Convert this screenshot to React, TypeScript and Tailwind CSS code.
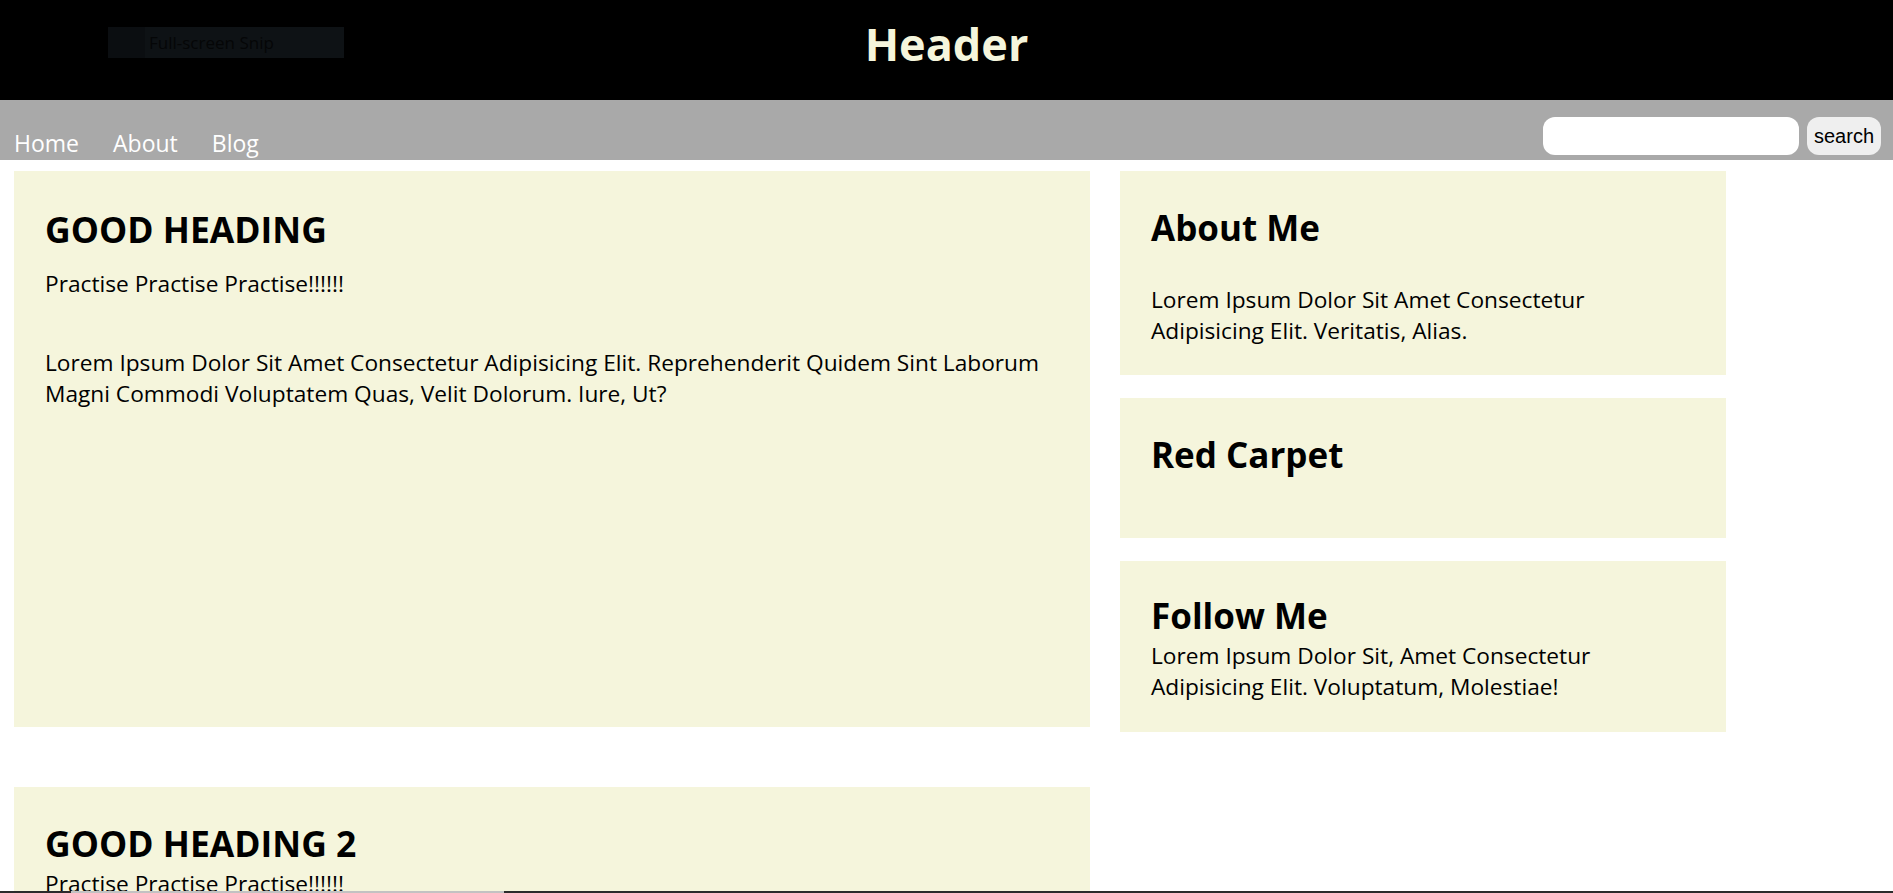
import { useState } from "react";

const font = { fontFamily: '"Segoe UI", "Open Sans", sans-serif' };

function Card({ children, className }: { children: React.ReactNode; className: string }) {
  return <div className={"bg-[#f5f5dc] text-black " + className}>{children}</div>;
}

export default function App() {
  const [query, setQuery] = useState("");

  return (
    <div className="relative min-h-screen bg-white" style={font}>
      {/* header */}
      <header className="relative h-[100px] bg-black pt-[20px] text-center">
        <h1 className="text-[45px] font-bold leading-[48px] text-[#f5f5dc]">Header</h1>
        <div className="absolute left-[108px] top-[27px] flex h-[31px] w-[236px] bg-[#0e1215]">
          <div className="w-[37px] bg-[#0b0e11]" />
          <span className="pl-[4px] text-[17px] leading-[31px] text-[#050607]">Full-screen Snip</span>
        </div>
      </header>

      {/* nav */}
      <nav className="flex h-[60px] items-end justify-between bg-[#a9a9a9] pl-[14px] pr-[12px]">
        <ul className="mb-[2px] flex list-none gap-[34px] text-[23px] leading-[30px] text-white">
          <li><a href="#">Home</a></li>
          <li><a href="#">About</a></li>
          <li><a href="#">Blog</a></li>
        </ul>
        <div className="mb-[5px] flex gap-[8px]" style={{ fontFamily: '"Liberation Sans", Arial, sans-serif' }}>
          <input
            type="text"
            value={query}
            onChange={(e) => setQuery(e.target.value)}
            className="h-[38px] w-[256px] rounded-[12px] border-0 bg-white px-3 text-[18px] outline-none"
          />
          <button type="button" className="h-[38px] w-[74px] rounded-[12px] bg-[#efefef] text-[20px] text-black">
            search
          </button>
        </div>
      </nav>

      {/* content */}
      <div className="flex gap-[30px] pl-[14px] pt-[11px]">
        <main className="flex w-[1076px] flex-col gap-[60px]">
          <Card className="h-[556px] px-[31px] pt-[34px]">
            <h2 className="text-[35.5px] font-bold leading-[48px]">GOOD HEADING</h2>
            <p className="mt-[15px] text-[22.7px] leading-[31px]">Practise Practise Practise!!!!!!</p>
            <p className="mt-[48px] text-[22.7px] leading-[31px]">
              Lorem Ipsum Dolor Sit Amet Consectetur Adipisicing Elit. Reprehenderit Quidem Sint Laborum Magni
              Commodi Voluptatem Quas, Velit Dolorum. Iure, Ut?
            </p>
          </Card>
          <Card className="h-[556px] px-[31px] pt-[32px]">
            <h2 className="text-[35.5px] font-bold leading-[48px]">GOOD HEADING 2</h2>
            <p className="mt-[1px] text-[22.7px] leading-[31px]">Practise Practise Practise!!!!!!</p>
          </Card>
        </main>

        <aside className="flex w-[606px] flex-col gap-[23px]">
          <Card className="h-[204px] px-[31px] pt-[33px]">
            <h3 className="text-[35px] font-bold leading-[48px]">About Me</h3>
            <p className="mt-[32px] text-[22.7px] leading-[31px]">
              Lorem Ipsum Dolor Sit Amet Consectetur Adipisicing Elit. Veritatis, Alias.
            </p>
          </Card>
          <Card className="h-[140px] px-[31px] pt-[33px]">
            <h3 className="text-[35px] font-bold leading-[48px]">Red Carpet</h3>
          </Card>
          <Card className="h-[171px] px-[31px] pt-[31px]">
            <h3 className="text-[35px] font-bold leading-[48px]">Follow Me</h3>
            <p className="pr-[80px] text-[22.7px] leading-[31px]">
              Lorem Ipsum Dolor Sit, Amet Consectetur Adipisicing Elit. Voluptatum, Molestiae!
            </p>
          </Card>
        </aside>
      </div>

      {/* bottom scroll strip */}
      <div className="fixed bottom-0 left-0 flex h-[2px] w-full bg-[#2b2b2b]">
        <div className="ml-[71px] w-[433px] bg-[#c2c2c2]" />
      </div>
    </div>
  );
}
